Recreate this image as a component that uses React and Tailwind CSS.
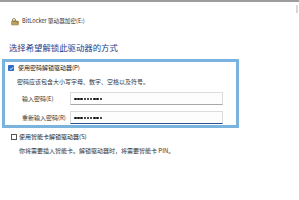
import React from "react";

const font = { fontFamily: '"Microsoft YaHei","Noto Sans CJK SC",sans-serif' };

function DriveIcon() {
  return (
    <svg width="9" height="8" viewBox="0 0 9 8">
      <rect x="0.5" y="3" width="7" height="4" rx="0.5" fill="#c9a64a" stroke="#8a6d22" strokeWidth="0.5" />
      <rect x="1" y="5.5" width="6" height="1" fill="#9b9b9b" />
      <circle cx="3" cy="2" r="1.5" fill="none" stroke="#7a6a3a" strokeWidth="0.8" />
      <path d="M4.2 2.6 L7 5" stroke="#7a6a3a" strokeWidth="0.8" />
    </svg>
  );
}

function Dots() {
  return (
    <div className="flex items-center gap-[0.7px]">
      {[0, 1, 2, 3, 4, 5, 6, 7, 8].map((i) => (
        <span key={i} className="block w-[2.5px] h-[2.5px] rounded-full bg-[#111]" />
      ))}
    </div>
  );
}

export default function App() {
  return (
    <div className="relative w-[299px] h-[200px] overflow-hidden bg-white text-[#333]" style={font}>
      <div className="h-[2px] bg-[#9c9c9c]" />
      <div className="absolute right-[1px] top-[5px] w-[2px] h-[8px] bg-[#d8d8d8]" />
      <div className="flex items-center gap-[2px] pl-[11px] pt-[14px] h-[26px]">
        <DriveIcon />
        <span className="text-[5.6px] leading-none text-[#333] whitespace-nowrap">BitLocker 驱动器加密(E:)</span>
      </div>
      <div className="pl-[9px] pt-[15px] text-[8.4px] leading-none text-[#1c3a8a] whitespace-nowrap">选择希望解锁此驱动器的方式</div>
      <div className="ml-[2px] mt-[8px] w-[237px] h-[69px] border-[3px] border-[#7ab4de] flex flex-col">
        <div className="flex items-center gap-[4px] pl-[3px] pt-[3px]">
          <div className="w-[6px] h-[6px] bg-[#2a6ac8] rounded-[1px] flex items-center justify-center">
            <svg width="5" height="5" viewBox="0 0 5 5"><path d="M0.8 2.6 L2 3.7 L4.2 1.2" stroke="white" strokeWidth="0.9" fill="none" /></svg>
          </div>
          <span className="text-[6px] leading-none text-[#222] whitespace-nowrap">使用密码解锁驱动器(P)</span>
        </div>
        <div className="pl-[12px] pt-[8px] text-[6px] leading-none text-[#333] whitespace-nowrap">密码应该包含大小写字母、数字、空格以及符号。</div>
        <div className="flex items-center pl-[17px] pt-[7px]">
          <span className="w-[48px] text-[6px] leading-none text-[#333] whitespace-nowrap">输入密码(E)</span>
          <div className="w-[153px] h-[13px] border border-[#dcdcdc] border-b-[#a8a8a8] bg-[#fdfdfd] flex items-center pl-[3px]">
            <Dots />
          </div>
        </div>
        <div className="flex items-center pl-[17px] pt-[6px]">
          <span className="w-[48px] text-[6px] leading-none text-[#333] whitespace-nowrap">重新输入密码(R)</span>
          <div className="w-[153px] h-[13px] border border-[#dcdcdc] border-b-[#2b4f8f] bg-[#fdfdfd] flex items-center pl-[3px]">
            <Dots />
          </div>
        </div>
      </div>
      <div className="flex items-center gap-[2px] pl-[11px] pt-[6px]">
        <div className="w-[6px] h-[6px] border border-[#555] bg-white" />
        <span className="text-[6px] leading-none text-[#222] whitespace-nowrap">使用智能卡解锁驱动器(S)</span>
      </div>
      <div className="pl-[19px] pt-[8px] text-[6px] leading-none text-[#333] whitespace-nowrap">你将需要插入智能卡。解锁驱动器时，将需要智能卡 PIN。</div>
    </div>
  );
}
